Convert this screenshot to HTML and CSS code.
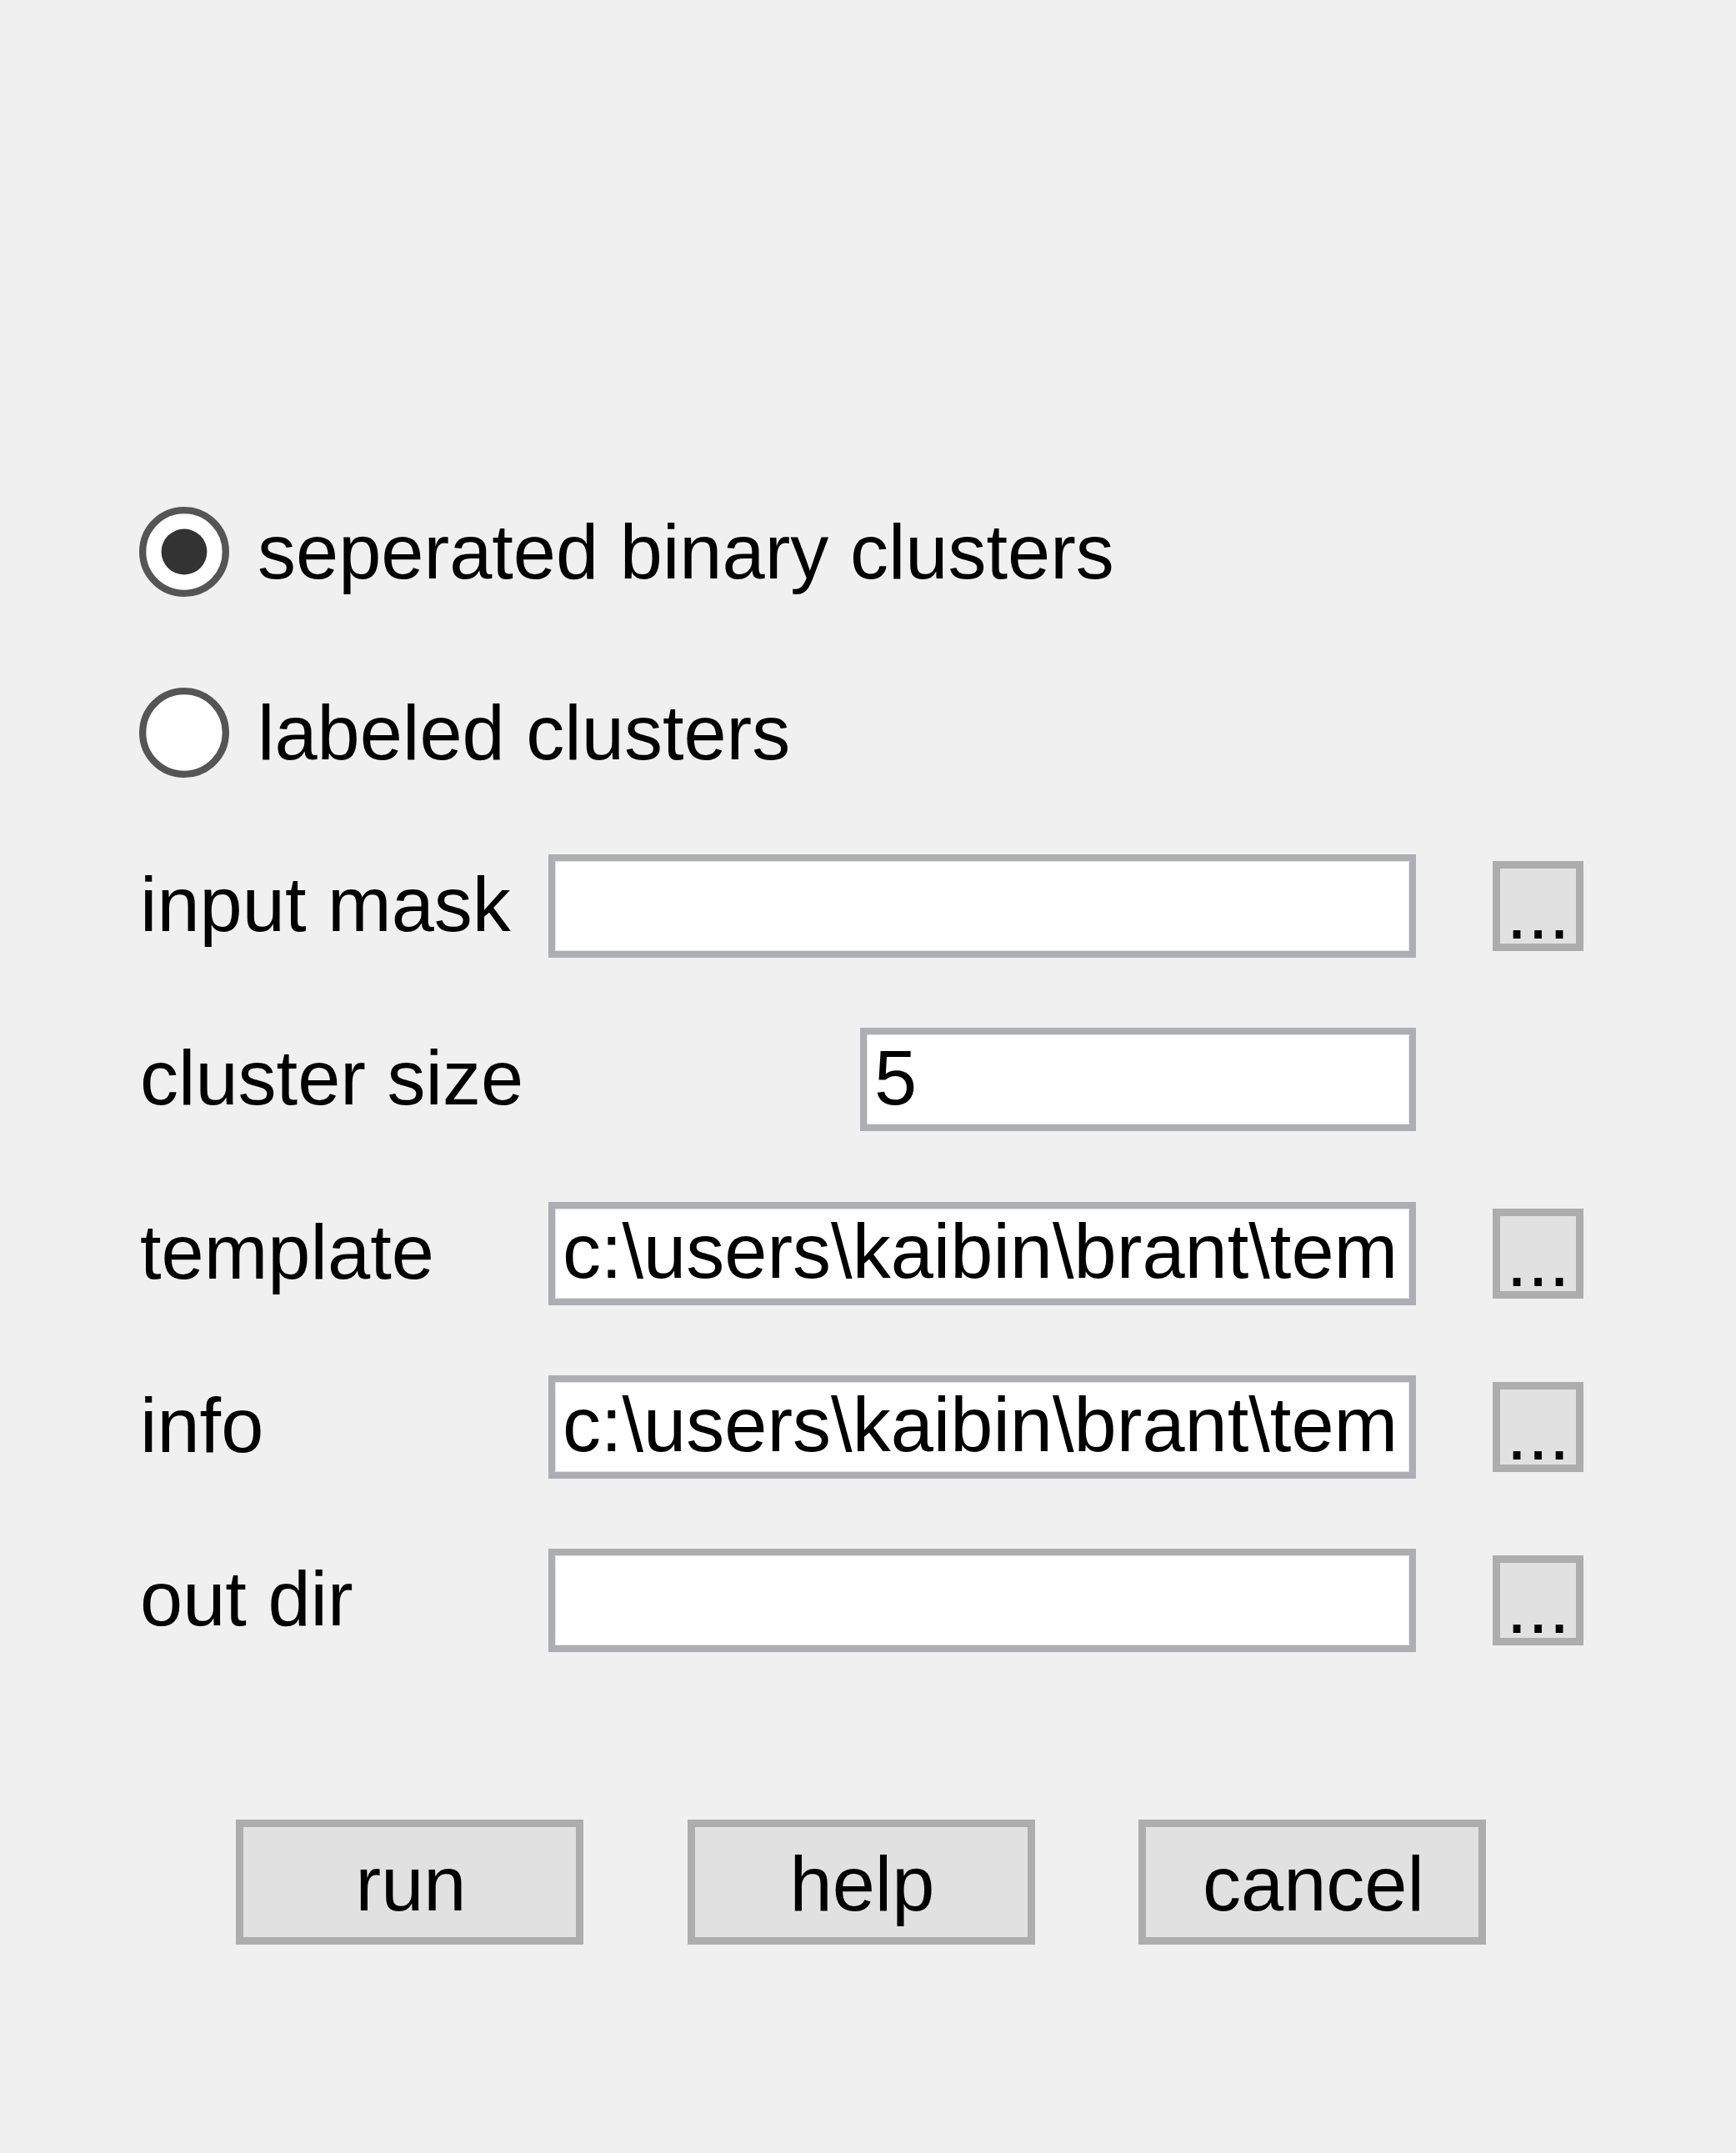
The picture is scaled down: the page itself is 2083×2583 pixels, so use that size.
FILE: index.html
```html
<!DOCTYPE html>
<html lang="en">
<head>
    <meta charset="UTF-8">
    <meta name="viewport" content="width=device-width, initial-scale=1.0">
    <title>cluster extract</title>
    <link rel="stylesheet" href="styles.css">
</head>
<body>
    <div class="dialog">
        <label class="radio-row">
            <svg class="radio" viewBox="0 0 13 13" width="108" height="108">
                <circle cx="6.5" cy="6.5" r="6" fill="#fff" stroke="#555" stroke-width="1"/>
                <circle cx="6.5" cy="6.5" r="3.3" fill="#333"/>
            </svg>
            <span>seperated binary clusters</span>
        </label>
        <label class="radio-row second">
            <svg class="radio" viewBox="0 0 13 13" width="108" height="108">
                <circle cx="6.5" cy="6.5" r="6" fill="#fff" stroke="#555" stroke-width="1"/>
            </svg>
            <span>labeled clusters</span>
        </label>

        <div class="form">
            <label class="field-label" for="mask">input mask</label>
            <input type="text" id="mask" class="field">
            <button class="browse">...</button>

            <label class="field-label" for="size">cluster size</label>
            <input type="text" id="size" class="field short" value="5">
            <div></div>

            <label class="field-label" for="template">template</label>
            <input type="text" id="template" class="field" value="c:\users\kaibin\brant\tem">
            <button class="browse">...</button>

            <label class="field-label" for="info">info</label>
            <input type="text" id="info" class="field" value="c:\users\kaibin\brant\tem">
            <button class="browse">...</button>

            <label class="field-label" for="outdir">out dir</label>
            <input type="text" id="outdir" class="field">
            <button class="browse">...</button>
        </div>

        <div class="actions">
            <button class="action">run</button>
            <button class="action">help</button>
            <button class="action">cancel</button>
        </div>
    </div>
</body>
</html>
```

FILE: styles.css
```css
html {
    background-color: #f0f0f0;
}
body {
    margin: 0;
    font-family: "Liberation Sans", Arial, sans-serif;
    font-size: 92px;
    color: #000;
    background-color: #f0f0f0;
    min-height: 2583px;
}
.dialog {
    padding: 608px 0 0 165px;
}
.radio-row {
    display: flex;
    align-items: center;
    height: 108px;
    gap: 34px;
    white-space: nowrap;
}
.radio-row.second {
    margin-top: 109px;
}
.radio {
    display: block;
    margin-left: 2px;
    flex-shrink: 0;
}
.form {
    display: grid;
    grid-template-columns: 493px 1041px 201px;
    grid-auto-rows: 124px;
    row-gap: 84.25px;
    margin-top: 92px;
}
.field-label {
    padding-left: 3px;
    line-height: 120px;
    white-space: nowrap;
}
.field {
    box-sizing: border-box;
    width: 100%;
    height: 124px;
    margin: 0;
    padding: 0 0 4px 9px;
    border: 8px solid #adaeb2;
    box-shadow: inset 0 0 0 1px #e2e2e4;
    background-color: #fff;
    font-family: inherit;
    font-size: 92px;
    color: #000;
    outline: none;
    border-radius: 0;
}
.field.short {
    width: 667px;
    justify-self: end;
}
.browse {
    box-sizing: border-box;
    justify-self: end;
    align-self: start;
    width: 109px;
    height: 108px;
    margin-top: 8px;
    padding: 0 0 6px 0;
    border: 9px solid #adadad;
    background-color: #e1e1e1;
    font-family: inherit;
    font-size: 92px;
    color: #000;
    border-radius: 0;
}
.actions {
    display: flex;
    gap: 124.5px;
    margin-top: 201px;
    padding-left: 118px;
}
.action {
    box-sizing: border-box;
    width: 417px;
    height: 150px;
    padding: 4px 0 0 3px;
    border: 9px solid #adadad;
    background-color: #e1e1e1;
    font-family: inherit;
    font-size: 92px;
    color: #000;
    border-radius: 0;
}
```
